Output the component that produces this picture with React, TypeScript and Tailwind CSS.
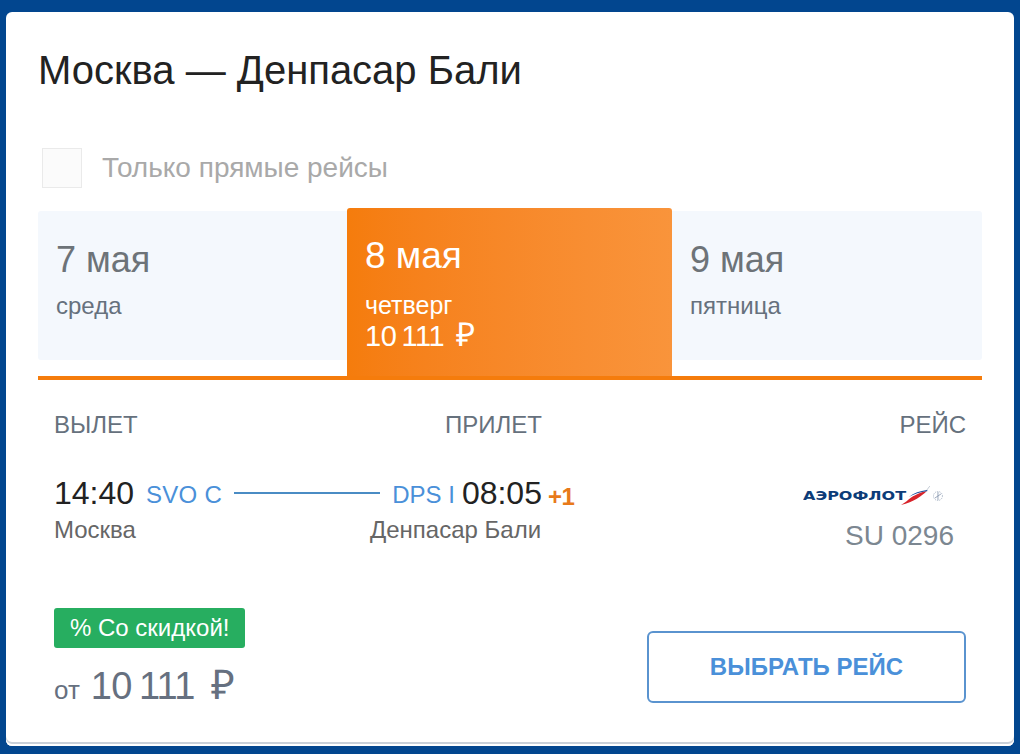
import React from "react";

function Logo() {
  return (
    <div className="flex items-center h-[20px] w-[142px]">
      <span className="inline-block w-[100px] whitespace-nowrap origin-left scale-x-[1.28] font-['DejaVu_Sans',sans-serif] font-bold text-[12.5px] leading-none text-[#0c3c78]">АЭРОФЛОТ</span>
      <svg width="30" height="20" viewBox="0 0 30 20" className="-ml-[2px]">
        <path d="M1 19 C8 16 10 9 27 5 C22 10 14 16 1 19Z" fill="#d8232a" />
        <path d="M9 11 C14 7 20 5 27 4 L28 5 C20 6 14 8 9 11Z" fill="#1f4e9c" />
        <path d="M27 4 L30 0" stroke="#9aa7b8" strokeWidth="0.6" />
      </svg>
      <svg width="14" height="14" viewBox="0 0 14 14" className="ml-[1px]">
        <circle cx="7" cy="7" r="4.5" fill="none" stroke="#a9b5c6" strokeWidth="1" strokeDasharray="1.2 1" />
        <path d="M4 9 L10 5 M7 3 v8" stroke="#7f90aa" strokeWidth="0.8" />
      </svg>
    </div>
  );
}

export default function App() {
  return (
    <div className="w-[1020px] h-[754px] overflow-hidden bg-[#02468f] px-[6px] pt-[12px] font-['Liberation_Sans',sans-serif]">
      <div className="bg-white rounded-[6px] h-[734px] px-[32px] pt-[34px] shadow-[inset_0_-2px_0_#ffffff,inset_0_-4px_0_#c9d0d9]">
        <h1 className="text-[40px] leading-[48px] text-[#222]">Москва — Денпасар Бали</h1>
        <div className="flex items-center mt-[54px] ml-[4px] h-[40px]">
          <div className="w-[40px] h-[40px] bg-[#fbfbfb] border border-[#eaeaea]" />
          <span className="ml-[20px] text-[28px] text-[#a9a9a9]">Только прямые рейсы</span>
        </div>
        <div className="mt-[20px] flex items-end border-b-4 border-[#f57c0c] h-[172px]">
          <div className="w-[309px] h-[149px] mb-[16px] bg-[#f4f8fd] rounded-l-[3px] pl-[18px] pt-[28px]">
            <div className="text-[36px] leading-[42px] text-[#6d7378]">7 мая</div>
            <div className="text-[24px] leading-[30px] mt-[10px] text-[#66717d]">среда</div>
          </div>
          <div className="w-[325px] h-[168px] bg-gradient-to-r from-[#f57c0c] to-[#f9943b] rounded-t-[3px] pl-[18px] pt-[27px] text-white">
            <div className="text-[37px] leading-[42px]">8 мая</div>
            <div className="text-[25px] leading-[30px] mt-[13px]">четверг</div>
            <div className="text-[29px] leading-[30px]"><span className="tracking-[-0.5px]">10{"\u2009"}111</span><span className="ml-[12px] text-[33px]">₽</span></div>
          </div>
          <div className="flex-1 h-[149px] mb-[16px] bg-[#f4f8fd] rounded-r-[3px] pl-[18px] pt-[28px]">
            <div className="text-[36px] leading-[42px] text-[#6d7378]">9 мая</div>
            <div className="text-[24px] leading-[30px] mt-[10px] text-[#66717d]">пятница</div>
          </div>
        </div>
        <div className="px-[16px]">
          <div className="grid grid-cols-[391px_1fr_auto] mt-[30px] text-[24px] leading-[30px] text-[#66717d]">
            <span>ВЫЛЕТ</span>
            <span>ПРИЛЕТ</span>
            <span>РЕЙС</span>
          </div>
          <div className="flex justify-between mt-[34px]">
            <div>
              <div className="flex items-center h-[38px]">
                <span className="text-[32px] text-[#222] w-[92px]">14:40</span>
                <span className="text-[24px] text-[#4a90d9] tracking-[0.3px] mt-[4px]">SVO C</span>
                <div className="w-[146px] h-[2px] bg-[#4a8cc4] mx-[12px]" />
                <span className="text-[24px] text-[#4a90d9] mt-[4px]">DPS I</span>
                <span className="text-[32px] text-[#222] ml-[7px]">08:05</span>
                <span className="text-[24px] font-bold text-[#e8791a] ml-[6px] mt-[8px] tracking-[-0.5px]">+1</span>
              </div>
              <div className="flex text-[24px] leading-[30px] mt-[3px] text-[#666]">
                <span className="w-[316px]">Москва</span>
                <span>Денпасар Бали</span>
              </div>
            </div>
            <div className="flex flex-col items-end">
              <div className="mt-[12px] mr-[21px]"><Logo /></div>
              <div className="text-[28px] leading-[36px] mt-[12px] mr-[12px] text-[#7c8791]">SU 0296</div>
            </div>
          </div>
          <div className="flex justify-between items-end mt-[54px]">
            <div>
              <div className="inline-block bg-[#27ae60] rounded-[3px] text-white text-[24px] leading-[40px] px-[16px]">% Со скидкой!</div>
              <div className="mt-[15px] flex items-baseline text-[#667080]">
                <span className="text-[26px]">от</span>
                <span className="text-[38px] ml-[11px] leading-[44px]"><span className="tracking-[-0.6px]">10{"\u2009"}111</span><span className="ml-[16px] text-[41px]">₽</span></span>
              </div>
            </div>
            <button className="w-[319px] h-[72px] mb-[7px] border-2 border-[#5a93cf] rounded-[6px] text-[24px] font-bold text-[#4a90d9]">ВЫБРАТЬ РЕЙС</button>
          </div>
        </div>
      </div>
    </div>
  );
}
